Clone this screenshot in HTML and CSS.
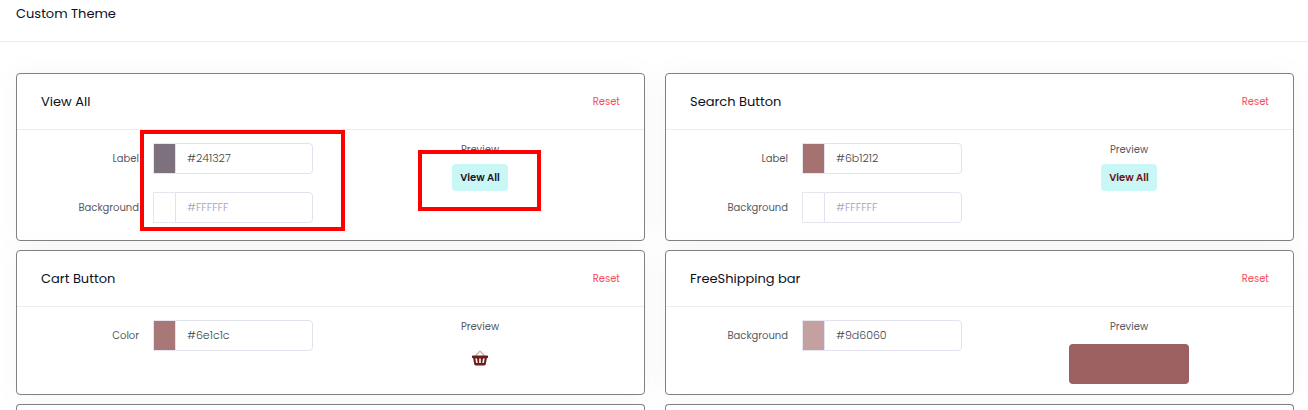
FILE: index.html
```html
<!DOCTYPE html>
<html lang="en">
<head>
<meta charset="utf-8">
<title>Custom Theme</title>
<link rel="stylesheet" href="styles.css">
</head>
<body>
<header class="page-header"><h1 class="title">Custom Theme</h1></header>
<main class="cards">
  <section class="card">
    <div class="card-header"><h2 class="title">View All</h2><button class="reset" type="button">Reset</button></div>
    <div class="card-body">
      <div class="fields">
        <label class="label" for="view-label">Label</label>
        <div class="field"><input class="swatch" type="color" value="#241327" aria-label="Pick label color"><input class="hex" id="view-label" type="text" value="#241327"></div>
        <label class="label" for="view-bg">Background</label>
        <div class="field"><input class="swatch" type="color" value="#ffffff" aria-label="Pick background color"><input class="hex" id="view-bg" type="text" placeholder="#FFFFFF"></div>
      </div>
      <div class="preview"><span class="preview-title">Preview</span><button class="sample sample-view" type="button">View All</button></div>
    </div>
    <div class="mark mark-fields"></div>
    <div class="mark mark-preview"></div>
  </section>
  <section class="card">
    <div class="card-header"><h2 class="title">Search Button</h2><button class="reset" type="button">Reset</button></div>
    <div class="card-body">
      <div class="fields">
        <label class="label" for="search-label">Label</label>
        <div class="field"><input class="swatch" type="color" value="#6b1212" aria-label="Pick label color"><input class="hex" id="search-label" type="text" value="#6b1212"></div>
        <label class="label" for="search-bg">Background</label>
        <div class="field"><input class="swatch" type="color" value="#ffffff" aria-label="Pick background color"><input class="hex" id="search-bg" type="text" placeholder="#FFFFFF"></div>
      </div>
      <div class="preview"><span class="preview-title">Preview</span><button class="sample sample-search" type="button">View All</button></div>
    </div>
  </section>
  <section class="card">
    <div class="card-header"><h2 class="title">Cart Button</h2><button class="reset" type="button">Reset</button></div>
    <div class="card-body">
      <div class="fields">
        <label class="label" for="cart-color">Color</label>
        <div class="field"><input class="swatch" type="color" value="#6e1c1c" aria-label="Pick color"><input class="hex" id="cart-color" type="text" value="#6e1c1c"></div>
      </div>
      <div class="preview"><span class="preview-title">Preview</span>
        <svg class="basket" viewBox="0 0 16 16" aria-hidden="true">
          <path d="M3.4 6.2 7.2 1.8Q8 1 8.8 1.8l3.8 4.4" fill="none" stroke="#6e1c1c" stroke-opacity=".32" stroke-width="1.6"/>
          <path fill="#6e1c1c" fill-rule="evenodd" d="M.6 5.6h14.8q.6 0 .6.6v1.2q0 .6-.6.6h-.5l-1.1 6q-.3 1.4-1.5 1.4H3.7q-1.2 0-1.5-1.4L1.1 8H.6Q0 8 0 7.400V6.200Q0 5.600.6 5.600zM3.300 8.600l.9 4.400h1.500l-.7-4.400zM7.200 8.600V13h1.600V8.600zM11 8.600 10.300 13h1.500l.9-4.400z"/>
        </svg>
      </div>
    </div>
  </section>
  <section class="card">
    <div class="card-header"><h2 class="title">FreeShipping bar</h2><button class="reset" type="button">Reset</button></div>
    <div class="card-body">
      <div class="fields">
        <label class="label" for="bar-bg">Background</label>
        <div class="field"><input class="swatch" type="color" value="#9d6060" aria-label="Pick background color"><input class="hex" id="bar-bg" type="text" value="#9d6060"></div>
      </div>
      <div class="preview"><span class="preview-title">Preview</span><div class="bar"></div></div>
    </div>
  </section>
  <section class="card card-next"></section>
  <section class="card card-next"></section>
</main>
</body>
</html>
```
FILE: styles.css
```css
* { box-sizing: border-box; }
body {
  display: flex;
  flex-direction: column;
  margin: 0;
  min-height: 100vh;
  background: #fff;
  color: #575962;
  font: 400 10px/14px Poppins, Inter, "Open Sans", sans-serif;
}
button, input { font: inherit; }
.page-header { padding: 4px 16px 17px; border-bottom: 1px solid #ebedf2; }
.title { margin: 0; font-size: 13px; line-height: 20px; font-weight: 400; color: #0c1024; }
.cards {
  flex: 1;
  display: grid;
  grid-template-columns: 1fr 1fr;
  grid-template-rows: auto auto 1fr;
  gap: 9px 20px;
  padding: 31px 14px 0 16px;
}
.card {
  position: relative;
  border: 1px solid #808080;
  border-radius: 4px;
  background: #fff;
  box-shadow: 0 0 30px rgba(0, 0, 0, 0.04);
}
.card-header {
  display: flex;
  align-items: center;
  justify-content: space-between;
  height: 56px;
  padding: 0 24px;
  border-bottom: 1px solid #ebedf2;
}
.reset { padding: 0; border: 0; background: none; color: #f64e60; }
.card-body {
  display: grid;
  grid-template-columns: 296px 1fr;
  align-items: start;
  gap: 14px;
  padding: 13px 11px 10px 0;
}
.fields {
  display: grid;
  grid-template-columns: 1fr 160px;
  align-items: center;
  gap: 18px 14px;
  padding-bottom: 7px;
}
.label { text-align: right; }
.field { display: flex; height: 31px; }
.swatch {
  width: 22px;
  height: 31px;
  padding: 0;
  border: 1px solid #e6e6ee;
  border-right: 0;
  background: #fff;
  appearance: none;
}
.swatch::-webkit-color-swatch-wrapper { padding: 0; }
.swatch::-webkit-color-swatch { border: 0; border-radius: 0; opacity: 0.6; }
.hex {
  flex: 1;
  min-width: 0;
  padding: 0 11px 2px;
  border: 1px solid #e2e2ee;
  border-radius: 0 4px 4px 0;
  background: #fff;
  color: #3b3f48;
  font-size: 11px;
  font-weight: 300;
}
.hex::placeholder { color: #a2a2b4; opacity: 1; }
.preview { display: flex; flex-direction: column; align-items: center; gap: 7px; }
.sample {
  height: 27px;
  padding: 0 8px;
  border: 0;
  border-radius: 4px;
  background: #c9f7f5;
  font-weight: 600;
}
.sample-view { color: #241327; }
.sample-search { color: #6b1212; }
.basket { width: 16px; height: 16px; margin-top: 9px; }
.bar {
  width: 120px;
  height: 40px;
  margin-top: 3px;
  border-radius: 4px;
  background: #9d6060;
}
.mark { position: absolute; border: 4px solid #f00; pointer-events: none; }
.mark-fields { left: 123px; top: 56px; width: 205px; height: 101px; }
.mark-preview { left: 401px; top: 76px; width: 123px; height: 61px; }
.card-next { border-bottom: 0; border-radius: 4px 4px 0 0; }
```
